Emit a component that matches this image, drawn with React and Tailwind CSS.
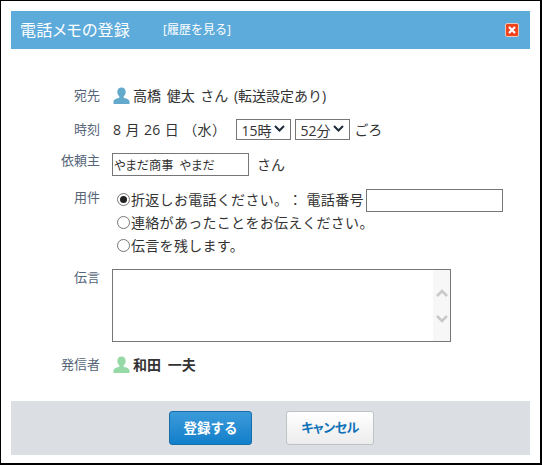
const font = 'font-["Open_Sans","Noto_Sans_CJK_JP",sans-serif]'

function Person({ color }) {
  return (
    <svg width="17" height="17" viewBox="0 0 17 17" className="shrink-0">
      <path d="M8.5 0.5c2.600 0 4.200 2 4.200 4.600 0 1.800-.8 3.400-2 4.200v1.400c1.800.7 5.800 1.200 5.800 3.800v2.500H.5v-2.500c0-2.600 4-3.100 5.800-3.800V9.300c-1.200-.8-2-2.400-2-4.200 0-2.600 1.600-4.600 4.200-4.600z" fill={color} />
    </svg>
  )
}

function Label({ children, className = '' }) {
  return <div className={`w-[89px] shrink-0 text-right text-[13px] leading-[20px] text-[#566578] ${className}`}>{children}</div>
}

function Radio({ checked, children, className = 'h-[23px]' }) {
  return (
    <label className={`flex items-center tracking-[0.3px] ${className}`}>
      <span className="flex h-[13px] w-[13px] shrink-0 items-center justify-center rounded-full border border-[#767676] bg-white">
        {checked && <span className="h-[7px] w-[7px] rounded-full bg-[#222]" />}
      </span>
      <input type="radio" name="yoken" defaultChecked={checked} className="hidden" />
      <span className="ml-[1px] whitespace-pre [text-spacing-trim:space-all]">{children}</span>
    </label>
  )
}

function TimeSelect({ value }) {
  return (
    <span className="relative block h-[21px] w-[55px]">
      <select defaultValue={value} className="h-full w-full appearance-none border border-[#767676] bg-white pl-[4px] text-[14px] text-[#333]">
        <option>{value}</option>
      </select>
      <svg width="11" height="7" viewBox="0 0 11 7" className="pointer-events-none absolute right-[6px] top-[6px]">
        <path d="M1 1l4.500 4.500L10 1" fill="none" stroke="#1f2b3a" strokeWidth="2" />
      </svg>
    </span>
  )
}

export default function App() {
  return (
    <div className={`${font} flex h-[465px] w-[542px] flex-col border-b-2 border-l border-r-2 border-t border-black bg-white p-[10px] pb-[8px] text-[14px] text-[#333]`}>
      {/* Header */}
      <div className="flex h-[38px] shrink-0 items-center bg-[#5dabdb] pl-[9px] pr-[11px] text-white">
        <span className="w-[110px] whitespace-nowrap text-[16px] leading-none [font-feature-settings:'palt'] tracking-[0.2px]">電話メモの登録</span>
        <a className="ml-[33px] text-[12px]">[履歴を見る]</a>
        <span className="ml-auto flex h-[14px] w-[14px] items-center justify-center rounded-[2px] border border-[#e8c8bc] bg-[#f0431c]">
          <svg width="8" height="8" viewBox="0 0 8 8"><path d="M1 1l6 6M7 1L1 7" stroke="#fff" strokeWidth="2.200" /></svg>
        </span>
      </div>

      {/* Form */}
      <div className="flex flex-1 flex-col">
        <div className="mt-[36px] flex h-[20px]">
          <Label>宛先</Label>
          <div className="ml-[13px] flex items-center">
            <Person color="#62a9cb" />
            <span className="ml-[3px] [word-spacing:2px]">高橋 健太 さん (転送設定あり)</span>
          </div>
        </div>

        <div className="mt-[14px] flex h-[21px]">
          <Label>時刻</Label>
          <div className="ml-[13px] flex items-center">
            <span className="tracking-[0.4px]">8 月 26 日 （水）</span>
            <span className="ml-[10px]"><TimeSelect value="15時" /></span>
            <span className="ml-[4px]"><TimeSelect value="52分" /></span>
            <span className="ml-[4px]">ごろ</span>
          </div>
        </div>

        <div className="mt-[13px] flex h-[23px]">
          <Label className="-mt-[3px]">依頼主</Label>
          <input defaultValue="やまだ商事  やまだ" className="ml-[12px] h-[23px] w-[137px] whitespace-pre border border-[#767676] px-[1px] text-[12.2px] text-[#333] [font-feature-settings:'palt']" />
          <span className="ml-[8px] self-center">さん</span>
        </div>

        <div className="mt-[12px] flex">
          <Label className="-mt-[1px]">用件</Label>
          <div className="ml-[17px] flex flex-col">
            <div className="flex h-[23px] items-center">
              <Radio checked>折返しお電話ください。： 電話番号</Radio>
              <input className="ml-[2px] mt-[2px] h-[23px] w-[137px] border border-[#767676]" />
            </div>
            <Radio>連絡があったことをお伝えください。</Radio>
            <Radio className="h-[22px]">伝言を残します。</Radio>
          </div>
        </div>

        <div className="mt-[13px] flex">
          <Label className="-mt-[2px]">伝言</Label>
          <div className="ml-[12px] flex h-[73px] w-[339px] border border-[#767676]">
            <textarea className="flex-1 resize-none outline-none" />
            <div className="flex w-[17px] flex-col items-center justify-center gap-[18px] bg-[#f7f7f7]">
              <svg width="12" height="8" viewBox="0 0 12 8"><path d="M1 7l5-5 5 5" fill="none" stroke="#c8c8c8" strokeWidth="2.500" /></svg>
              <svg width="12" height="8" viewBox="0 0 12 8"><path d="M1 1l5 5 5-5" fill="none" stroke="#c8c8c8" strokeWidth="2.500" /></svg>
            </div>
          </div>
        </div>

        <div className="mt-[12px] flex h-[20px]">
          <Label>発信者</Label>
          <div className="ml-[13px] flex items-center">
            <Person color="#97d9a6" />
            <span className="ml-[3px] font-bold [word-spacing:3px]">和田 一夫</span>
          </div>
        </div>
      </div>

      {/* Footer */}
      <div className="flex h-[54px] shrink-0 items-center bg-[#dbdfe3] pl-[158px]">
        <button className="h-[34px] w-[83px] rounded-[3px] border border-[#1a6ea8] bg-gradient-to-b from-[#3a9bd9] to-[#0f7fcb] text-[13.5px] font-bold text-white">登録する</button>
        <button className="ml-[34px] h-[34px] w-[88px] rounded-[3px] border border-[#bcc4c8] bg-gradient-to-b from-white to-[#ececec] text-[13px] font-bold tracking-[-0.5px] text-[#1272b8] [font-feature-settings:'palt']">キャンセル</button>
      </div>
    </div>
  )
}
